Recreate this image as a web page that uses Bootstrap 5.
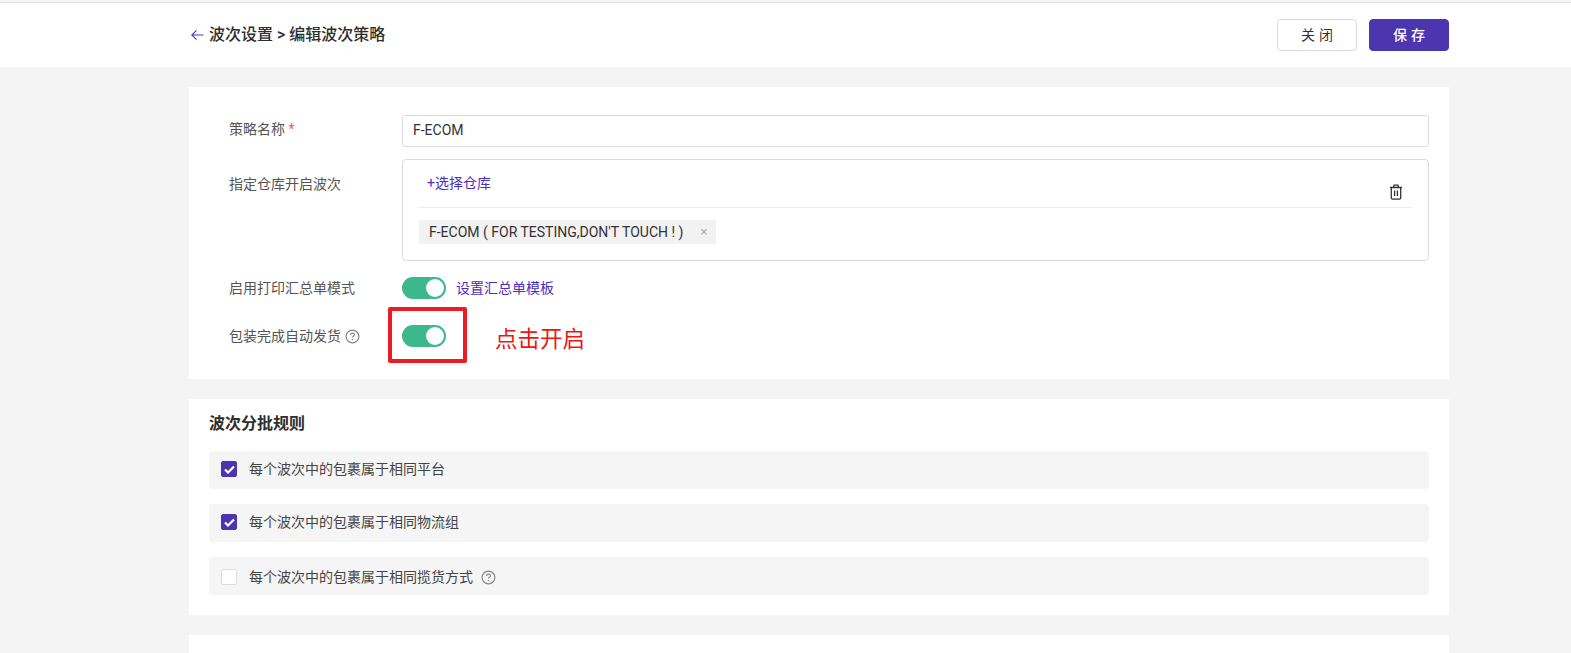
<!DOCTYPE html>
<html lang="zh">
<head>
<meta charset="utf-8">
<title>编辑波次策略</title>
<link href="https://cdn.jsdelivr.net/npm/bootstrap@5.3.0/dist/css/bootstrap.min.css" rel="stylesheet">
<style>
html,body{height:653px;overflow:hidden}
body{background:#f4f4f4;font-family:Roboto,"Noto Sans CJK SC",sans-serif;font-size:14px;color:#333;padding-top:2px}
.topbar{background:#fff;border-top:1px solid #e3e3e3;height:65px}
.wrap{width:1260px;margin-left:189px}
.crumb{font-size:16px;font-weight:500;color:#2e2e2e;line-height:24px;margin-top:20px;margin-left:2px;gap:5px}
.btn-close-x,.btn-save{width:80px;height:32px;font-size:14px;letter-spacing:4px;padding:0 0 0 4px;border-radius:4px}
.btn-close-x{background:#fff;border:1px solid #d9d9d9;color:#333}
.btn-save{background:#4b36b0;border:1px solid #4b36b0;color:#fff;font-weight:500}
.btnset{gap:12px;margin-top:16px}
.panel{background:#fff;width:1260px;margin-left:189px;margin-top:20px}
.panel-a{height:292px;padding:28px 20px 0 40px}
.panel-b{height:216px;padding:15px 20px 0 20px}
.panel-c{height:60px;padding:17px 20px 0}
.lab{width:173px;flex:none;color:#555}
.lab-up{padding-bottom:3px}
.lab-wh{margin-top:27px}
.lab-dn{padding-top:2px}
.req{color:#f05a5a}
.fld{height:32px;border:1px solid #dcdcdc;border-radius:3px;padding:0 10px;line-height:29px;color:#333;width:1027px}
.box{width:1027px;height:102px;border:1px solid #dcdcdc;border-radius:4px;padding:0 16px;margin-top:12px}
.boxhead{height:48px;border-bottom:1px solid #ececec;padding:0 9px 0 8px}
.lnk{color:#4b2fc0;text-decoration:none}
.tagx{background:#f2f2f2;height:24px;line-height:24px;padding:0 10px 0 10px;border-radius:2px;color:#333;display:inline-flex;gap:15px;margin-top:12px}
.tagx i{font-style:normal;color:#b0b0b0;font-size:13px}
.tagx i{padding-left:2px;margin-right:-1px}
.sw{width:44px;height:22px;border-radius:11px;background:#3db88b;position:relative;flex:none}
.sw::after{content:"";position:absolute;right:2px;top:2px;width:18px;height:18px;border-radius:50%;background:#fff}
.rowsw{margin-top:16px}
.rowauto{margin-top:8px}
.swlink{margin-left:10px}
.redbox{width:79px;height:56px;border:4px solid #ed1c24;border-radius:2px;margin-left:-14px;padding:2px 0 0 10px;flex:none}
.hint{color:#f01414;font-size:22.5px;margin-left:28px;margin-top:9px;line-height:1}
.hp{color:#888;flex:none}
.ttl{font-size:16px;font-weight:700;color:#2e2e2e;line-height:20px;margin-bottom:17px}
.rowx{height:38px;background:#f5f5f5;border-radius:4px;padding-left:12px;margin-bottom:15px;color:#444;padding-bottom:2px}
.rowx.lo{padding-top:2px;padding-bottom:0}
.ck{width:16px;height:16px;border-radius:2px;flex:none;margin-right:12px;background:#fff;border:1px solid #ddd}
.ck.on{background:#4b36b0;border-color:#4b36b0}
</style>
</head>
<body>
<div class="topbar">
 <div class="wrap d-flex justify-content-between align-items-start">
  <div class="crumb d-flex align-items-center">
   <svg width="13" height="12" viewBox="0 0 13 12" fill="none" stroke="#4b36b0" stroke-width="1.1"><path d="M12.500 6H.8M5.500 1.300.8 6l4.700 4.700"/></svg>
   <span>波次设置 &gt; 编辑波次策略</span>
  </div>
  <div class="btnset d-flex">
   <button class="btn-close-x" type="button">关闭</button>
   <button class="btn-save" type="button">保存</button>
  </div>
 </div>
</div>

<div class="panel panel-a">
 <div class="d-flex align-items-center">
  <div class="lab lab-up">策略名称 <span class="req">*</span></div>
  <div class="fld">F-ECOM</div>
 </div>
 <div class="d-flex">
  <div class="lab lab-wh">指定仓库开启波次</div>
  <div class="box">
   <div class="boxhead d-flex justify-content-between align-items-center">
    <a class="lnk" href="#">+选择仓库</a>
    <svg class="mt-3" width="14" height="16" viewBox="0 0 14 16" fill="none" stroke="#333" stroke-width="1.3"><path d="M1 3.500h12M4.500 3.300 5 1.200h4l.5 2.100M2.300 3.500v10.200c0 .9.5 1.400 1.400 1.400h6.600c.9 0 1.400-.5 1.400-1.400V3.500M5.600 6.500v5.500M8.400 6.500v5.500"/></svg>
   </div>
   <span class="tagx">F-ECOM ( FOR TESTING,DON'T TOUCH ! ) <i>×</i></span>
  </div>
 </div>
 <div class="rowsw d-flex align-items-center">
  <div class="lab">启用打印汇总单模式</div>
  <div class="sw"></div>
  <a class="lnk swlink" href="#">设置汇总单模板</a>
 </div>
 <div class="rowauto d-flex align-items-center">
  <div class="lab lab-dn d-flex align-items-center gap-1">包装完成自动发货
   <svg class="hp" width="15" height="15" viewBox="0 0 15 15" fill="none" stroke="currentColor" stroke-width="1.2"><circle cx="7.500" cy="7.500" r="6.400"/><path d="M5.600 6c0-1.200.9-1.900 1.900-1.900S9.400 4.800 9.400 5.800c0 1.300-1.900 1.500-1.900 2.800"/><path d="M7.500 10v1.200"/></svg>
  </div>
  <div class="redbox d-flex align-items-center"><div class="sw"></div></div>
  <div class="hint">点击开启</div>
 </div>
</div>

<div class="panel panel-b">
 <div class="ttl">波次分批规则</div>
 <div class="rowx d-flex align-items-center">
  <span class="ck on d-flex align-items-center justify-content-center"><svg width="11" height="9" viewBox="0 0 11 9" fill="none" stroke="#fff" stroke-width="2.200"><path d="m1 4.500 3 3 6-6"/></svg></span>每个波次中的包裹属于相同平台
 </div>
 <div class="rowx d-flex align-items-center">
  <span class="ck on d-flex align-items-center justify-content-center"><svg width="11" height="9" viewBox="0 0 11 9" fill="none" stroke="#fff" stroke-width="2.200"><path d="m1 4.500 3 3 6-6"/></svg></span>每个波次中的包裹属于相同物流组
 </div>
 <div class="rowx lo d-flex align-items-center">
  <span class="ck"></span>每个波次中的包裹属于相同揽货方式
  <svg class="hp ms-2" width="15" height="15" viewBox="0 0 15 15" fill="none" stroke="currentColor" stroke-width="1.2"><circle cx="7.500" cy="7.500" r="6.400"/><path d="M5.600 6c0-1.200.9-1.900 1.900-1.900S9.400 4.800 9.400 5.800c0 1.300-1.900 1.500-1.900 2.800"/><path d="M7.500 10v1.200"/></svg>
 </div>
</div>

<div class="panel panel-c"><div class="ttl">波次类型</div></div>
<script src="https://cdn.jsdelivr.net/npm/bootstrap@5.3.0/dist/js/bootstrap.bundle.min.js"></script>
</body>
</html>
